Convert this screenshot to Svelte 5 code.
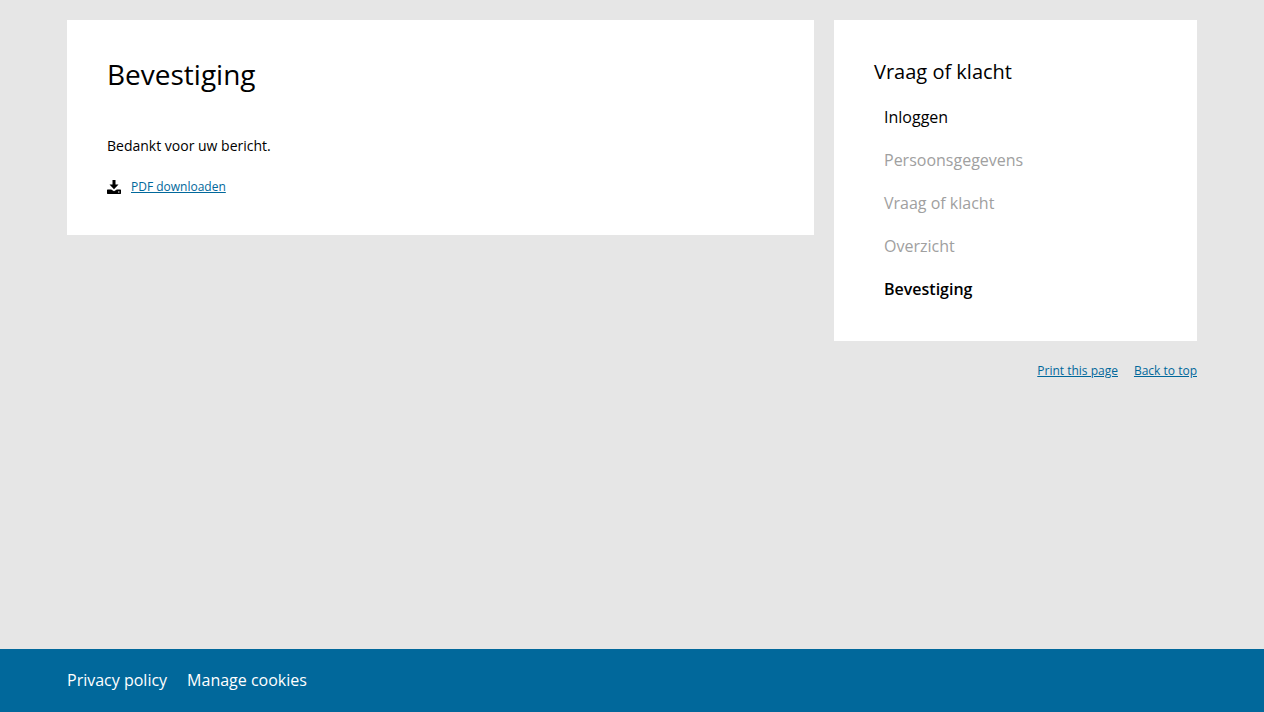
<script>
  const steps = [
    { label: 'Inloggen', state: 'open' },
    { label: 'Persoonsgegevens', state: 'disabled' },
    { label: 'Vraag of klacht', state: 'disabled' },
    { label: 'Overzicht', state: 'disabled' },
    { label: 'Bevestiging', state: 'current' }
  ];
</script>

<div class="page" id="top">
  <div class="layout">
    <main class="card">
      <h1>Bevestiging</h1>
      <p>Bedankt voor uw bericht.</p>
      <a class="download" href="#pdf">
        <svg viewBox="0 0 14 14" width="14" height="14" aria-hidden="true">
          <path d="M5.500 0h3v4.500h3L7 9.300 2.500 4.500h3z" />
          <path fill-rule="evenodd" d="M.5 9.500h3.700L7 11.300l2.800-1.800h3.700l.5.5v3.500l-.5.5H.5l-.5-.5V10zM11 11.500v1h1.500v-1z" />
        </svg>
        <span>PDF downloaden</span>
      </a>
    </main>
    <aside>
      <nav class="card" aria-labelledby="steps-title">
        <h2 id="steps-title">Vraag of klacht</h2>
        <ol>
          {#each steps as step}
            <li class={step.state} aria-current={step.state === 'current' ? 'step' : undefined}>
              {#if step.state === 'open'}<a href="#login">{step.label}</a>{:else}{step.label}{/if}
            </li>
          {/each}
        </ol>
      </nav>
      <div class="tools">
        <a href="#print">Print this page</a>
        <a href="#top">Back to top</a>
      </div>
    </aside>
  </div>
  <footer>
    <div class="links">
      <a href="#privacy">Privacy policy</a>
      <a href="#cookies">Manage cookies</a>
    </div>
  </footer>
</div>

<style>
  :global(body) {
    margin: 0;
  }
  .page {
    display: flex;
    flex-direction: column;
    min-height: 100vh;
    background: #e6e6e6;
    color: #000;
    font-family: "Open Sans", "Noto Sans", sans-serif;
  }
  .layout,
  .links {
    box-sizing: border-box;
    width: 100%;
    max-width: 1170px;
    margin: 0 auto;
    padding: 0 20px;
  }
  .layout {
    flex: 1;
    display: grid;
    grid-template-columns: minmax(0, 747fr) minmax(0, 363fr);
    align-items: start;
    gap: 20px;
    padding-top: 20px;
  }
  .card {
    padding: 36px 40px 38px;
    background: #fff;
  }
  nav.card {
    padding-bottom: 30px;
  }
  h1,
  h2,
  p,
  ol {
    margin: 0;
    padding: 0;
  }
  h1 {
    font-size: 28px;
    line-height: 36px;
    font-weight: 400;
  }
  p {
    margin-top: 42px;
    font-size: 14px;
    line-height: 24px;
  }
  .download {
    display: flex;
    align-items: center;
    gap: 10px;
    margin-top: 19px;
    font-size: 12px;
    line-height: 20px;
    color: #01689b;
    text-decoration: none;
  }
  .download span {
    text-decoration: underline;
  }
  svg {
    fill: #000;
  }
  h2 {
    font-size: 20px;
    line-height: 32px;
    font-weight: 400;
  }
  ol {
    padding: 8px 10px 0;
    list-style: none;
  }
  li {
    padding: 9px 0 10px;
    font-size: 16px;
    line-height: 24px;
  }
  li a {
    color: inherit;
    text-decoration: none;
  }
  .disabled {
    color: #a0a0a0;
  }
  .current {
    font-weight: 600;
  }
  .tools {
    display: flex;
    justify-content: flex-end;
    gap: 16px;
    padding: 20px 0;
    font-size: 12px;
    line-height: 20px;
  }
  .tools a {
    color: #01689b;
  }
  footer {
    padding: 19px 0 20px;
    background: #01689b;
  }
  .links {
    display: flex;
    gap: 20px;
    font-size: 16px;
    line-height: 24px;
  }
  .links a {
    color: #fff;
    text-decoration: none;
  }
</style>
